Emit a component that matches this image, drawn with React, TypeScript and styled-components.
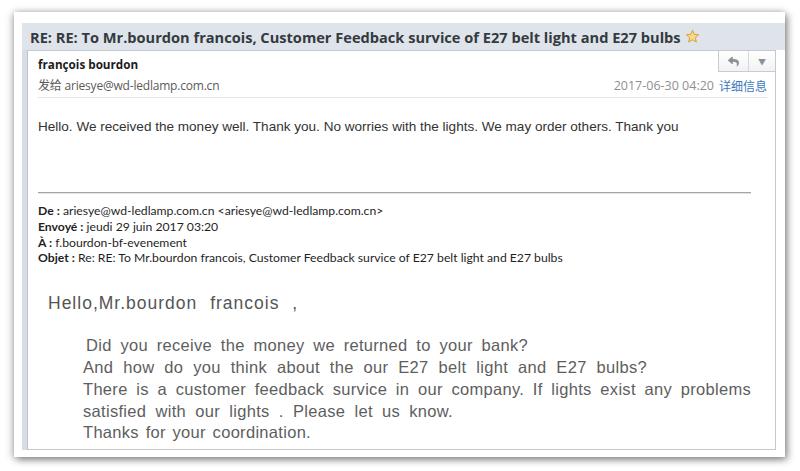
import React from "react";
import styled, { createGlobalStyle } from "styled-components";
import { FaReply } from "react-icons/fa";

const GlobalStyle = createGlobalStyle`
  html, body { margin: 0; padding: 0; background: #ffffff; }
  body { font-family: "Open Sans", "Noto Sans CJK SC", sans-serif; }
`;

const Page = styled.div`
  width: 800px;
  height: 471px;
  box-sizing: border-box;
  padding: 12px 15px 14px 14px;
  background: #ffffff;
  overflow: hidden;
`;

const Sheet = styled.div`
  width: 771px;
  height: 445px;
  box-sizing: border-box;
  padding: 11px 0 0 8px;
  background: #ffffff;
  box-shadow: 3px 3px 7px rgba(0, 0, 0, 0.38), -3px 2px 7px rgba(0, 0, 0, 0.16),
    0 -2px 6px rgba(0, 0, 0, 0.12);
`;

const Window = styled.div`
  display: flex;
  flex-direction: column;
`;

const TitleBar = styled.div`
  height: 27px;
  display: flex;
  align-items: center;
  gap: 4px;
  padding-left: 8px;
  background: #dfe4ea;
  color: #333a40;
  font-family: "Open Sans", sans-serif;
  font-weight: 700;
  font-size: 14.6px;
  white-space: nowrap;
`;

const Star = styled.svg`
  width: 15px;
  height: 15px;
  flex: none;
`;

const BodyRow = styled.div`
  display: flex;
`;

const SideStrip = styled.div`
  width: 5px;
  height: 400px;
  background: #d7dde4;
`;

const Panel = styled.div`
  position: relative;
  width: 749px;
  height: 400px;
  box-sizing: border-box;
  border: 1px solid #c3c9d0;
  border-left-color: #b9c1ca;
  background: #ffffff;
  padding: 4px 8px 0 10px;
  overflow: hidden;
`;

const ReplyGroup = styled.div`
  position: absolute;
  top: -1px;
  right: -1px;
  display: flex;
  height: 20px;
  border: 1px solid #c8ccd1;
  background: linear-gradient(#ffffff, #f1f2f4);
`;

const ReplyButton = styled.div<{ $w: number; $divider?: boolean }>`
  width: ${p => p.$w}px;
  display: flex;
  align-items: center;
  justify-content: center;
  color: #8c9196;
  font-size: 8px;
  border-right: ${p => (p.$divider ? "1px solid #d4d7db" : "none")};
`;

const SenderName = styled.div`
  font-family: "Open Sans", sans-serif;
  font-weight: 700;
  font-size: 11.7px;
  line-height: 18px;
  color: #1c1c1c;
`;

const MetaRow = styled.div`
  margin-top: 4px;
  display: flex;
  justify-content: space-between;
  align-items: center;
  line-height: 18px;
  padding-bottom: 2px;
  border-bottom: 1px solid #e2e4e6;
`;

const Recipient = styled.div`
  font-family: "Open Sans", "Noto Sans CJK SC", sans-serif;
  font-size: 12px;
  letter-spacing: -0.2px;
  color: #5a5a5a;
`;

const MetaRight = styled.div`
  display: flex;
  align-items: center;
  gap: 5px;
`;

const DateText = styled.span`
  font-family: "Open Sans", sans-serif;
  font-size: 12.5px;
  color: #8f8f8f;
`;

const DetailLink = styled.span`
  font-family: "Noto Sans CJK SC", sans-serif;
  font-size: 12px;
  color: #3b78bd;
`;

const Message = styled.div`
  margin-top: 20px;
  font-family: "Liberation Sans", Arial, sans-serif;
  font-size: 13.55px;
  line-height: 18px;
  color: #333333;
  white-space: nowrap;
`;

const Rule = styled.div`
  margin-top: 56px;
  width: 713px;
  height: 0;
  border-top: 1px solid #a4a4a4;
  border-bottom: 1px solid #e4e4e4;
`;

const Quoted = styled.div`
  margin-top: 9px;
  font-family: "Lato", sans-serif;
  font-size: 12.2px;
  line-height: 15.8px;
  color: #1f1f1f;
  white-space: nowrap;
`;

const Label = styled.b`
  font-weight: 700;
`;

const Greeting = styled.div`
  margin: 26px 0 0 10px;
  font-family: "Liberation Sans", Arial, sans-serif;
  font-size: 17.5px;
  line-height: 22px;
  letter-spacing: 1px;
  word-spacing: 7px;
  color: #555555;
  white-space: nowrap;
`;

const Paragraph = styled.div`
  margin: 21px 0 0 45px;
  font-family: "Liberation Sans", Arial, sans-serif;
  font-size: 16.5px;
  line-height: 21.8px;
  letter-spacing: 0.3px;
  color: #5e5e5e;
`;

const Line = styled.div<{ $indent?: number; $width: number }>`
  white-space: normal;
  padding-left: ${p => p.$indent ?? 0}px;
  width: ${p => p.$width}px;
  text-align: justify;
  text-align-last: justify;
`;

export default function App() {
  return (
    <Page>
      <GlobalStyle />
      <Sheet>
        <Window>
          <TitleBar>
            <span>RE: RE: To Mr.bourdon francois, Customer Feedback survice of E27 belt light and E27 bulbs</span>
            <Star viewBox="0 0 24 24">
              <path
                d="M12 2.2l2.9 6.4 7 .7-5.3 4.7 1.6 6.9L12 17.3l-6.2 3.6 1.6-6.9-5.3-4.7 7-.7z"
                fill="#f6d98a"
                stroke="#d9a23a"
                strokeWidth="1.6"
                strokeLinejoin="round"
              />
            </Star>
          </TitleBar>
          <BodyRow>
            <SideStrip />
            <Panel>
              <ReplyGroup>
                <ReplyButton $w={29} $divider>
                  <FaReply size={11} />
                </ReplyButton>
                <ReplyButton $w={26}>▼</ReplyButton>
              </ReplyGroup>
              <SenderName>françois bourdon</SenderName>
              <MetaRow>
                <Recipient>发给 ariesye@wd-ledlamp.com.cn</Recipient>
                <MetaRight>
                  <DateText>2017-06-30 04:20</DateText>
                  <DetailLink>详细信息</DetailLink>
                </MetaRight>
              </MetaRow>
              <Message>
                Hello. We received the money well. Thank you. No worries with the lights. We may order others. Thank you
              </Message>
              <Rule />
              <Quoted>
                <div><Label>De :</Label> ariesye@wd-ledlamp.com.cn &lt;ariesye@wd-ledlamp.com.cn&gt;</div>
                <div><Label>Envoyé :</Label> jeudi 29 juin 2017 03:20</div>
                <div><Label>À :</Label> f.bourdon-bf-evenement</div>
                <div><Label>Objet :</Label> Re: RE: To Mr.bourdon francois, Customer Feedback survice of E27 belt light and E27 bulbs</div>
              </Quoted>
              <Greeting>Hello,Mr.bourdon francois ,</Greeting>
              <Paragraph>
                <Line $indent={3} $width={442}>Did you receive the money we returned to your bank?</Line>
                <Line $width={564}>And how do you think about the our E27 belt light and E27 bulbs?</Line>
                <Line $width={668}>There is a customer feedback survice in our company. If lights exist any problems</Line>
                <Line $width={370}>satisfied with our lights . Please let us know.</Line>
                <Line $width={228}>Thanks for your coordination.</Line>
              </Paragraph>
            </Panel>
          </BodyRow>
        </Window>
      </Sheet>
    </Page>
  );
}
